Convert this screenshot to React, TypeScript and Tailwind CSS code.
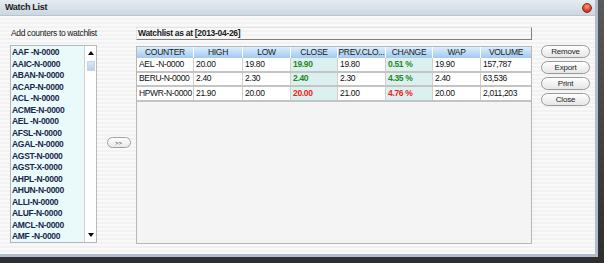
import React from "react";

const items = [
  "AAF -N-0000",
  "AAIC-N-0000",
  "ABAN-N-0000",
  "ACAP-N-0000",
  "ACL -N-0000",
  "ACME-N-0000",
  "AEL -N-0000",
  "AFSL-N-0000",
  "AGAL-N-0000",
  "AGST-N-0000",
  "AGST-X-0000",
  "AHPL-N-0000",
  "AHUN-N-0000",
  "ALLI-N-0000",
  "ALUF-N-0000",
  "AMCL-N-0000",
  "AMF -N-0000",
];

const cols = [
  { name: "COUNTER", w: "w-[56px]" },
  { name: "HIGH", w: "w-[49px]" },
  { name: "LOW", w: "w-[48px]" },
  { name: "CLOSE", w: "w-[47px]" },
  { name: "PREV.CLO...", w: "w-[48px]" },
  { name: "CHANGE", w: "w-[47px]" },
  { name: "WAP", w: "w-[48px]" },
  { name: "VOLUME", w: "w-[51px]" },
];

type Row = { c: string[]; color: "g" | "r" };
const rows: Row[] = [
  { c: ["AEL -N-0000", "20.00", "19.80", "19.90", "19.80", "0.51 %", "19.90", "157,787"], color: "g" },
  { c: ["BERU-N-0000", "2.40", "2.30", "2.40", "2.30", "4.35 %", "2.40", "63,536"], color: "g" },
  { c: ["HPWR-N-0000", "21.90", "20.00", "20.00", "21.00", "4.76 %", "20.00", "2,011,203"], color: "r" },
];

function Btn({ label }: { label: string }) {
  return (
    <div className="h-[13px] w-[49px] rounded-full border border-[#9a9a9a] bg-gradient-to-b from-white to-[#e6e6e6] flex items-center justify-center text-[8px] text-[#222] leading-none tracking-[-0.2px]">
      {label}
    </div>
  );
}

export default function App() {
  return (
    <div
      className="w-[604px] h-[263px] bg-gradient-to-b from-[#5a5a5a] to-[#2e2e2e] overflow-hidden"
      style={{ fontFamily: '"Liberation Sans", Arial, sans-serif' }}
    >
      <div className="w-[598px] h-[257px] bg-[#f7f7f7] border-r-[3px] border-b-[3px] border-[#aebccc] flex flex-col">
        {/* title bar */}
        <div className="h-[16px] shrink-0 bg-gradient-to-b from-[#e6ecf2] to-[#cdd7e2] border-b border-[#b8c4d0] flex items-center justify-between pl-[5px] pr-[3px]">
          <span className="text-[9px] font-bold text-[#1a1a1a] leading-none tracking-[-0.3px]">Watch List</span>
          <div className="w-[10px] h-[10px] rounded-full bg-[radial-gradient(circle_at_50%_30%,#ff9a8a,#d8402a_60%,#a02010)] border border-[#8a2a1a]" />
        </div>
        {/* body */}
        <div className="flex-1 flex pl-[10px] pt-[10px] bg-[repeating-linear-gradient(180deg,#f9f9f9_0px,#f9f9f9_2px,#f2f2f2_2px,#f2f2f2_4px)]">
          {/* left column */}
          <div className="w-[87px] flex flex-col">
            <div className="h-[14px] leading-[14px] text-[8.5px] tracking-[-0.35px] text-[#1a1a1a] whitespace-nowrap pl-[1px]">
              Add counters to watchlist
            </div>
            <div className="mt-[5px] h-[198px] border border-[#b0b8c0] bg-[#eafafa] flex">
              <div className="flex-1 pt-[1px] pl-[1px]">
                {items.map((it) => (
                  <div
                    key={it}
                    className="h-[11.5px] leading-[11.5px] text-[8.5px] tracking-[-0.3px] font-bold text-[#18284a] whitespace-pre"
                  >
                    {it}
                  </div>
                ))}
              </div>
              <div className="w-[12px] bg-white border-l border-[#d0d0d0] flex flex-col items-center justify-between py-[2px]">
                <div className="flex flex-col items-center">
                  <div className="w-0 h-0 border-l-[3px] border-r-[3px] border-b-[4px] border-l-transparent border-r-transparent border-b-black mt-[3px]" />
                  <div className="w-[8px] h-[10px] mt-[6px] bg-gradient-to-b from-[#d8e6f4] to-[#b8cfe8] border border-[#c8d4e0]" />
                </div>
                <div className="w-0 h-0 border-l-[3px] border-r-[3px] border-t-[4px] border-l-transparent border-r-transparent border-t-black mb-[3px]" />
              </div>
            </div>
          </div>
          {/* middle */}
          <div className="w-[39px] pt-[111px] flex justify-center">
            <div className="h-[11px] w-[24px] rounded-full border border-[#a0a0a0] bg-gradient-to-b from-white to-[#e8e8e8] flex items-center justify-center text-[6px] text-[#333] leading-none ml-[4px]">
              &gt;&gt;
            </div>
          </div>
          {/* right */}
          <div className="w-[396px] flex flex-col">
            <div className="mt-[1px] h-[13px] border-r border-b border-[#808080] border-t border-l border-t-[#e4e4e4] border-l-[#e4e4e4] flex items-center pl-[1px]">
              <span className="text-[8.5px] font-bold text-[#1a1a1a] tracking-[-0.3px]">Watchlist as at [2013-04-26]</span>
            </div>
            <div className="mt-[6px] h-[198px] border border-[#b8b8b8] bg-[#f4f4f4] flex flex-col">
              <div className="flex h-[11px] shrink-0">
                {cols.map((c, i) => (
                  <div
                    key={c.name}
                    className={`${c.w} h-full bg-gradient-to-b from-[#dbeefc] to-[#a2c9ef] flex items-center justify-center text-[8.5px] text-[#1a1a1a] leading-none tracking-[-0.3px] ${i > 0 ? "border-l border-white" : ""}`}
                  >
                    {c.name}
                  </div>
                ))}
              </div>
              {rows.map((r, ri) => (
                <div key={ri} className="flex h-[14.5px] shrink-0 border-b-2 border-[#c4c4c4] bg-white">
                  {r.c.map((v, ci) => {
                    const colored = ci === 3 || ci === 5;
                    const color = colored ? (r.color === "g" ? "text-[#238a23] font-bold" : "text-[#f02020] font-bold") : "text-[#111]";
                    return (
                      <div
                        key={ci}
                        className={`${cols[ci].w} h-full flex items-center pl-[2px] text-[8.5px] tracking-[-0.35px] whitespace-pre ${color} ${colored ? "bg-[#dcf1ef]" : ""} ${ci > 0 ? "border-l border-[#d0d0d0]" : ""}`}
                      >
                        {v}
                      </div>
                    );
                  })}
                </div>
              ))}
            </div>
          </div>
          {/* buttons */}
          <div className="ml-[9px] pt-[19px] flex flex-col gap-[3px]">
            <Btn label="Remove" />
            <Btn label="Export" />
            <Btn label="Print" />
            <Btn label="Close" />
          </div>
        </div>
      </div>
    </div>
  );
}
